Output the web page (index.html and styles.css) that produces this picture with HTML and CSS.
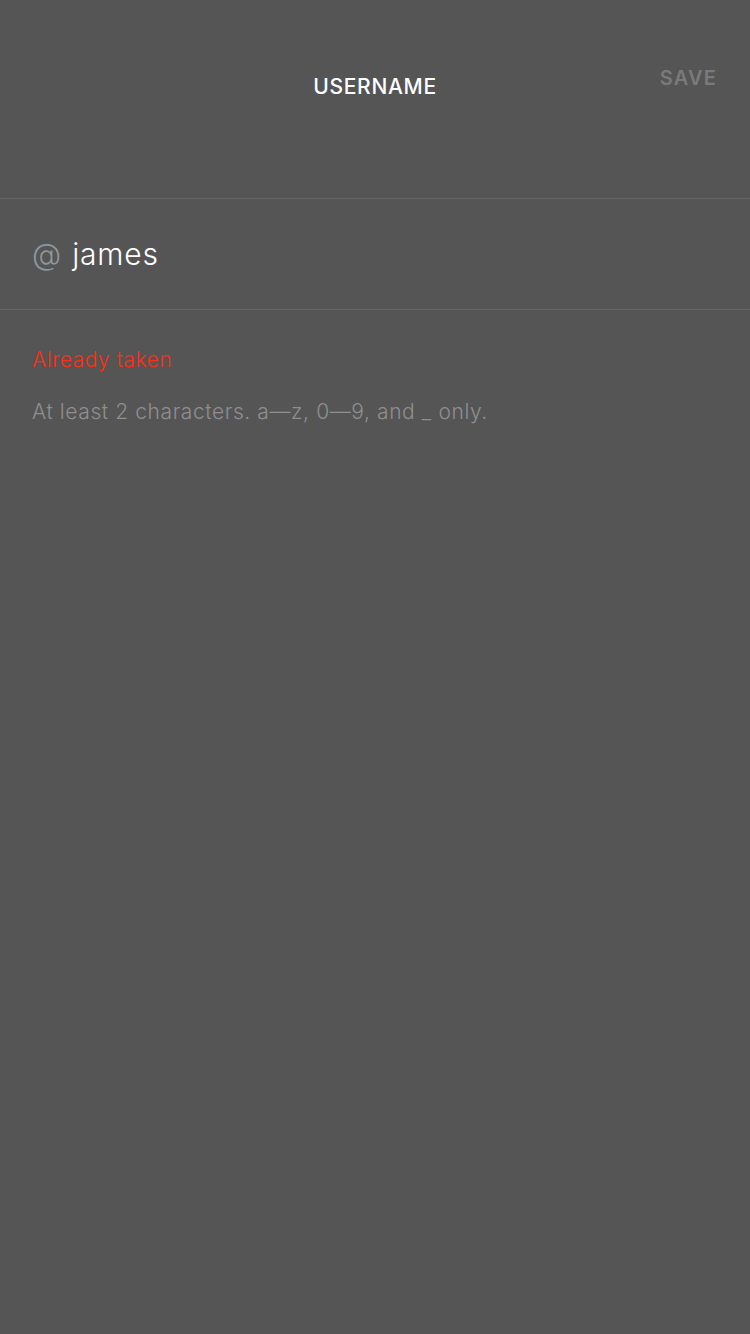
FILE: index.html
```html
<!DOCTYPE html>
<html>
<head>
<meta charset="utf-8">
<link rel="stylesheet" href="styles.css">
</head>
<body>
<div class="screen">
  <header class="header">
    <div class="title">USERNAME</div>
    <div class="save">SAVE</div>
  </header>
  <div class="field">
    <span class="at">@</span>
    <span class="value">james</span>
  </div>
  <div class="messages">
    <div class="error">Already taken</div>
    <div class="hint">At least 2 characters. a—z, 0—9, and _ only.</div>
  </div>
</div>
</body>
</html>
```

FILE: styles.css
```css
html, body {
  margin: 0;
  padding: 0;
  background: #555555;
}
.screen {
  width: 750px;
  height: 1334px;
  background: #555555;
  font-family: Inter, "Noto Sans", sans-serif;
  overflow: hidden;
}
.header {
  position: relative;
  height: 199px;
  border-bottom: 1px solid #666666;
  box-sizing: border-box;
}
.title {
  padding-top: 74px;
  text-align: center;
  color: #ffffff;
  font-size: 21px;
  font-weight: 500;
  letter-spacing: 0.7px;
  line-height: 26px;
}
.save {
  position: absolute;
  right: 33px;
  top: 65px;
  color: #7a7a7a;
  font-size: 20px;
  font-weight: 600;
  letter-spacing: 1.2px;
  line-height: 26px;
}
.field {
  height: 111px;
  border-bottom: 1px solid #666666;
  box-sizing: border-box;
  display: flex;
  align-items: center;
  padding-left: 32px;
  gap: 11px;
}
.at {
  color: #8e979d;
  font-size: 30px;
  font-weight: 300;
}
.value {
  color: #ffffff;
  font-size: 30px;
  font-weight: 300;
  letter-spacing: 0.8px;
}
.messages {
  padding: 25px 32px 0;
}
.error {
  color: #ff2d12;
  font-size: 21px;
  font-weight: 300;
  line-height: 50px;
  letter-spacing: 0.5px;
}
.hint {
  margin-top: 2px;
  color: #8f8f8f;
  font-size: 21px;
  font-weight: 300;
  line-height: 50px;
  letter-spacing: 0.6px;
}
```
